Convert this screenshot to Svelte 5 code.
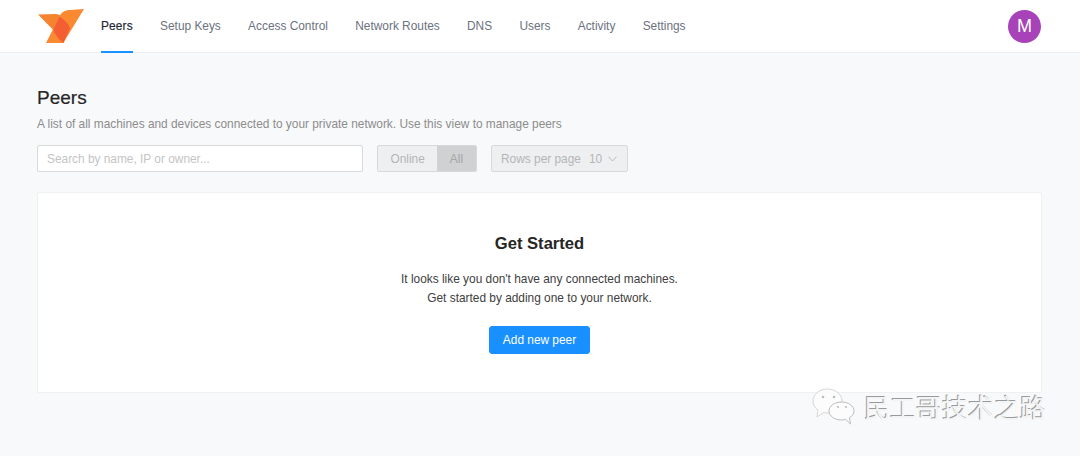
<script>
	const navItems = ['Peers', 'Setup Keys', 'Access Control', 'Network Routes', 'DNS', 'Users', 'Activity', 'Settings']
</script>

<header class="topbar">
	<svg class="logo" width="46" height="34" viewBox="0 0 46 34">
		<path d="M0 5.500 L18 5 C24 6 30 12 32 19.300 L25.300 34 C20 30 17 25 15.300 21 Z" fill="#f68330" />
		<path d="M21.300 7.700 C23 3.500 27 1 32 1 L46 0 L25.300 34 L8 34 Z" fill="#fa8a32" />
		<path d="M21.300 7.700 C26 10 30 14 32 19.300 L25.300 34 C20 30 17 25 15.300 21 Z" fill="#f35e32" />
	</svg>
	<nav>
		{#each navItems as item, i}
			<span class="nav-item" class:active={i === 0}>{item}</span>
		{/each}
	</nav>
	<div class="avatar">M</div>
</header>

<main>
	<h1>Peers</h1>
	<p class="sub">A list of all machines and devices connected to your private network. Use this view to manage peers</p>

	<div class="filters">
		<input type="text" placeholder="Search by name, IP or owner..." disabled />
		<div class="segment">
			<span class="seg">Online</span>
			<span class="seg on">All</span>
		</div>
		<div class="rows">
			<span>Rows per page</span>
			<span class="count">10</span>
			<svg width="10" height="6" viewBox="0 0 10 6"><path d="M.5 .5 L5 5.200 L9.500 .5" fill="none" stroke="#b5b5b5" /></svg>
		</div>
	</div>

	<section class="card">
		<h2>Get Started</h2>
		<p>It looks like you don't have any connected machines.<br />Get started by adding one to your network.</p>
		<button>Add new peer</button>
	</section>
</main>

<div class="watermark">
	<svg width="44" height="38" viewBox="0 0 44 38">
		<path d="M15.500 1 C7.500 1 1 6.500 1 13 C1 17 3 20 6 22 L5 29 L11.500 24.500 C13 25 14 25 15.500 25 C23.500 25 30 19.500 30 13 C30 6.500 23.500 1 15.500 1 Z" fill="#fcfcfc" stroke="#d6d6d6" />
		<path d="M29.500 14 C22.500 14 17 18 17 23 C17 28 22.500 32 29.500 32 C31 32 32 31.800 33.500 31.300 L38.500 36 L37.500 29.500 C40.500 28 42 25.500 42 23 C42 18 36.500 14 29.500 14 Z" fill="#fcfcfc" stroke="#bdbdbd" />
		<g fill="#bdbdbd">
			<circle cx="11" cy="9" r="1.300" /><circle cx="22" cy="9" r="1.300" />
			<circle cx="26" cy="19" r="1.100" /><circle cx="34" cy="19" r="1.100" />
		</g>
	</svg>
	<span>民工哥技术之路</span>
</div>

<style>
	:global(body) {
		background: #f8f9fb;
		font-family: "Liberation Sans", Arial, sans-serif;
	}

	.topbar {
		display: flex;
		align-items: center;
		height: 52px;
		padding: 0 39px 0 38px;
		background: #fff;
		border-bottom: 1px solid #eceef1;
		box-sizing: content-box;
	}

	.logo {
		flex: none;
		margin-right: 17px;
	}

	nav {
		display: flex;
		align-self: flex-start;
		gap: 27.300px;
		flex: 1;
	}

	.nav-item {
		display: flex;
		align-items: center;
		height: 53px;
		box-sizing: border-box;
		font-size: 11.880px;
		color: #6b7280;
		border-bottom: 2px solid transparent;
	}

	.nav-item.active {
		color: #1f2937;
		-webkit-text-stroke: 0.2px #1f2937;
		letter-spacing: 0.15px;
		border-bottom-color: #1890ff;
	}

	.avatar {
		display: grid;
		place-items: center;
		width: 33px;
		height: 33px;
		border-radius: 50%;
		background: #a742b8;
		color: #fff;
		font-size: 18px;
	}

	main {
		padding: 34px 38px 0 37px;
	}

	h1 {
		margin: 0;
		font-size: 19px;
		font-weight: 400;
		line-height: 22px;
		color: #262626;
		-webkit-text-stroke: 0.2px #262626;
	}

	.sub {
		margin: 7px 0 0;
		font-size: 11.880px;
		line-height: 16px;
		color: #8c8c8c;
	}

	.filters {
		display: flex;
		align-items: stretch;
		gap: 14px;
		margin-top: 13px;
		height: 27px;
	}

	input {
		width: 326px;
		box-sizing: border-box;
		margin: 0;
		padding: 0 9px;
		border: 1px solid #d9d9d9;
		border-radius: 2px;
		background: #fff;
		font: 11.880px "Liberation Sans", Arial, sans-serif;
	}

	input::placeholder {
		color: #c4c4c4;
	}

	.segment {
		display: flex;
		border: 1px solid #d9d9d9;
		border-radius: 2px;
		background: #eeeff1;
		font-size: 11.880px;
		color: #b5b5b5;
	}

	.seg {
		display: flex;
		align-items: center;
		padding: 0 12.500px;
	}

	.seg.on {
		background: #d0d1d3;
		color: #a5a5a5;
	}

	.rows {
		display: flex;
		align-items: center;
		width: 137px;
		box-sizing: border-box;
		padding: 0 9.500px;
		border: 1px solid #d9d9d9;
		border-radius: 2px;
		background: #eeeff1;
		font-size: 11.880px;
		color: #b5b5b5;
		white-space: nowrap;
	}

	.count {
		margin: 0 6px 0 8px;
	}

	.card {
		display: flex;
		flex-direction: column;
		align-items: center;
		height: 201px;
		box-sizing: border-box;
		margin-top: 20px;
		padding-top: 41px;
		background: #fff;
		border: 1px solid #f0f0f0;
		border-radius: 2px;
	}

	h2 {
		margin: 0;
		font-size: 16.600px;
		font-weight: 700;
		line-height: 20px;
		color: #262626;
	}

	.card p {
		margin: 16px 0 0;
		text-align: center;
		font-size: 11.880px;
		line-height: 19px;
		color: #404040;
	}

	button {
		margin-top: 18px;
		width: 101px;
		height: 28px;
		border: 1px solid #1890ff;
		border-radius: 3px;
		background: #1890ff;
		color: #fff;
		font: 11.880px "Liberation Sans", Arial, sans-serif;
	}

	.watermark {
		position: absolute;
		left: 812px;
		top: 388px;
		display: flex;
		align-items: center;
		gap: 8px;
	}

	.watermark span {
		font-family: "Noto Sans CJK SC", sans-serif;
		font-size: 26px;
		line-height: 38px;
		color: #f4f4f4;
		text-shadow: -1px -1px 0 #9a9a9a;
	}
</style>
